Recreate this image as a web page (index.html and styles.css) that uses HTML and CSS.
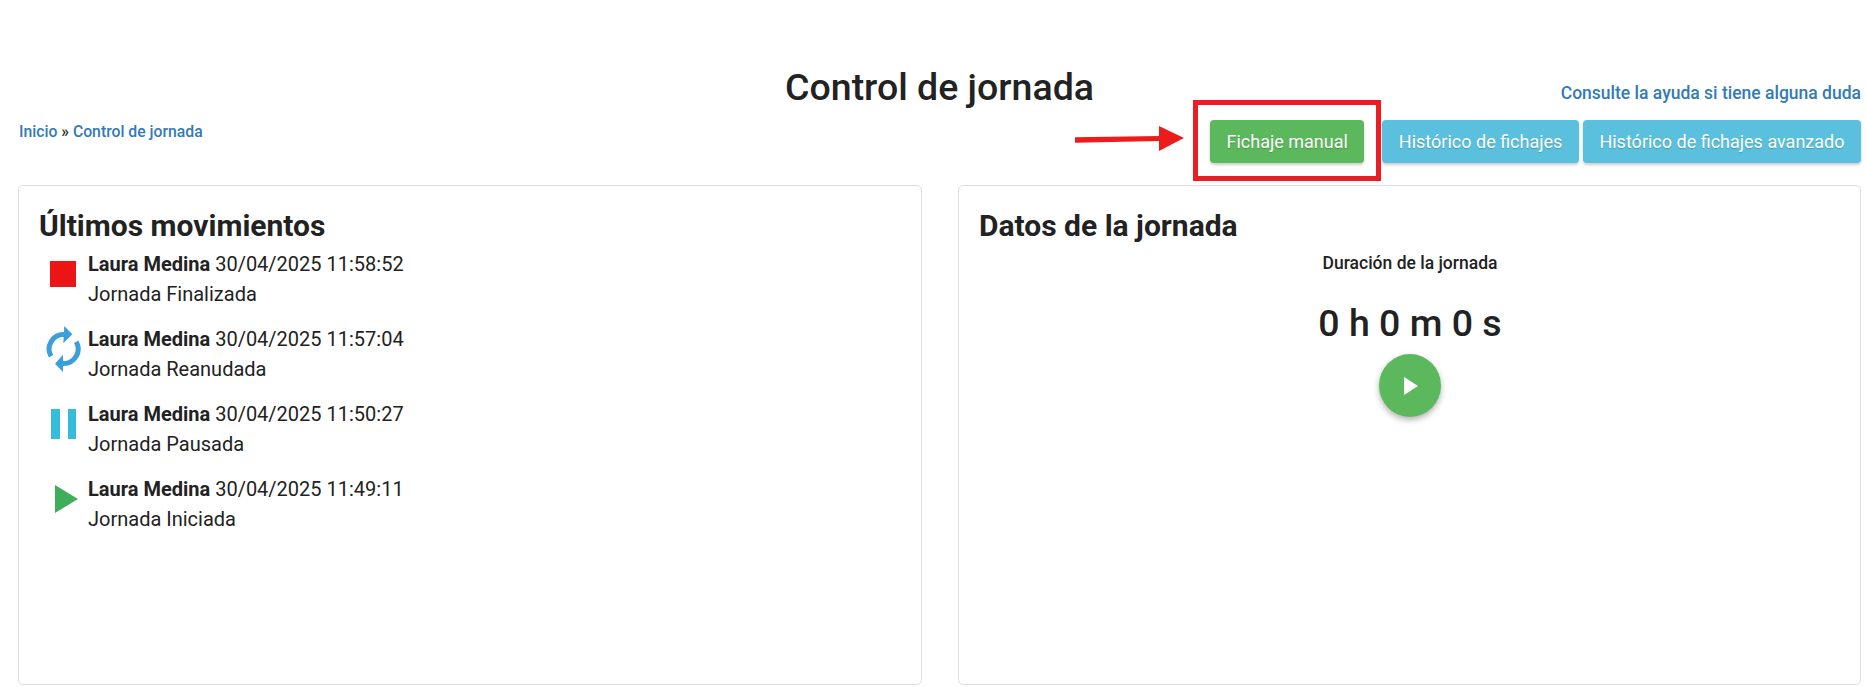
FILE: index.html
```html
<!DOCTYPE html>
<html lang="es">
<head>
    <meta charset="UTF-8">
    <title>Control de jornada</title>
    <link rel="stylesheet" href="styles.css">
</head>
<body>
    <div class="page-top">
        <h1 class="page-title">Control de jornada</h1>
        <a class="help-link" href="#">Consulte la ayuda si tiene alguna duda</a>
    </div>

    <div class="toolbar">
        <div class="breadcrumb"><a href="#">Inicio</a> » <a href="#">Control de jornada</a></div>
        <div class="actions">
            <button class="btn btn-success">Fichaje manual</button>
            <button class="btn btn-info">Histórico de fichajes</button>
            <button class="btn btn-info">Histórico de fichajes avanzado</button>
        </div>
    </div>

    <!-- anotacion de la captura -->
    <svg class="mark-arrow" width="110" height="26" viewBox="0 0 110 26">
        <path d="M0 11.3 L85 10 L85 15 L0 16.7 Z" fill="#ec1c1c"/>
        <path d="M84 0 L109 12 L84 25 Z" fill="#ec1c1c"/>
    </svg>
    <div class="mark-box"></div>

    <div class="panels">
        <section class="panel">
            <h2 class="panel-title">Últimos movimientos</h2>
            <ul class="moves">
                <li class="move">
                    <svg class="move-icon" width="50" height="60" viewBox="0 0 50 60"><rect x="11" y="12" width="26" height="26" fill="#ec1515"/></svg>
                    <div>
                        <div><b>Laura Medina</b> 30/04/2025 11:58:52</div>
                        <div>Jornada Finalizada</div>
                    </div>
                </li>
                <li class="move">
                    <svg class="move-icon" width="50" height="60" viewBox="0 0 50 60">
                        <path d="M12.1 32.25 A14.5 14.5 0 0 1 25.3 10.5" fill="none" stroke="#3b9fdb" stroke-width="5"/>
                        <path d="M25.3 2 L33.3 10.3 L24.3 19.3 Z" fill="#3b9fdb"/>
                        <path d="M37.2 17.75 A14.5 14.5 0 0 1 24 39.5" fill="none" stroke="#3b9fdb" stroke-width="5"/>
                        <path d="M24 30.7 L16 39.7 L24 48 Z" fill="#3b9fdb"/>
                    </svg>
                    <div>
                        <div><b>Laura Medina</b> 30/04/2025 11:57:04</div>
                        <div>Jornada Reanudada</div>
                    </div>
                </li>
                <li class="move">
                    <svg class="move-icon" width="50" height="60" viewBox="0 0 50 60"><rect x="12" y="10" width="9" height="30" fill="#35bcdc"/><rect x="29" y="10" width="8" height="30" fill="#35bcdc"/></svg>
                    <div>
                        <div><b>Laura Medina</b> 30/04/2025 11:50:27</div>
                        <div>Jornada Pausada</div>
                    </div>
                </li>
                <li class="move">
                    <svg class="move-icon" width="50" height="60" viewBox="0 0 50 60"><path d="M16 11 L39 25 L16 39 Z" fill="#3fae5a"/></svg>
                    <div>
                        <div><b>Laura Medina</b> 30/04/2025 11:49:11</div>
                        <div>Jornada Iniciada</div>
                    </div>
                </li>
            </ul>
        </section>

        <section class="panel">
            <h2 class="panel-title">Datos de la jornada</h2>
            <div class="shift">
                <div class="shift-label">Duración de la jornada</div>
                <div class="shift-time">0 h 0 m 0 s</div>
                <button class="play-btn">
                    <svg width="14" height="18" viewBox="0 0 14 18"><path d="M0 0 L14 9 L0 18 Z" fill="#fff"/></svg>
                </button>
            </div>
        </section>
    </div>
</body>
</html>
```

FILE: styles.css
```css
* {
    box-sizing: border-box;
}

body {
    margin: 0;
    padding: 0 6px 0 18px;
    position: relative;
    height: 687px;
    overflow: hidden;
    font-family: Roboto, sans-serif;
    font-size: 20px;
    line-height: 30px;
    color: #222;
    background-color: #fff;
}

a {
    color: #337ab7;
    text-decoration: none;
}

.page-top {
    display: flex;
    justify-content: flex-end;
    align-items: flex-end;
    position: relative;
    height: 106px;
}

.page-title {
    position: absolute;
    left: 0;
    right: 0;
    top: 65px;
    margin: 0;
    text-align: center;
    font-size: 37.5px;
    line-height: 44px;
    font-weight: 500;
}

.help-link {
    font-size: 17.5px;
    font-weight: 500;
    line-height: 24px;
    margin-bottom: 1px;
}

.toolbar {
    display: flex;
    justify-content: space-between;
    align-items: flex-start;
    height: 79px;
}

.breadcrumb {
    margin: 13px 0 0 1px;
    font-size: 15.75px;
    font-weight: 500;
    line-height: 26px;
}

.actions {
    display: flex;
    gap: 4px;
    margin-top: 14px;
}

.btn {
    height: 43px;
    padding: 0 16.5px;
    border: none;
    border-radius: 4px;
    color: #fff;
    font-family: inherit;
    font-size: 18px;
    text-shadow: 0 1px 1px rgba(0, 0, 0, 0.2);
    box-shadow: 0 2px 3px rgba(0, 0, 0, 0.2);
}

.btn-success {
    background-color: #5cb85c;
    margin-right: 14px;
}

.btn-info {
    background-color: #5bc0de;
}

.mark-box {
    position: absolute;
    left: 1193px;
    top: 100px;
    width: 188px;
    height: 81px;
    border: 5px solid #ec1c24;
}

.mark-arrow {
    position: absolute;
    left: 1075px;
    top: 126px;
}

.panels {
    display: grid;
    grid-template-columns: 904px 903px;
    gap: 36px;
}

.panel {
    height: 500px;
    padding: 20px;
    border: 1px solid #ddd;
    border-radius: 5px;
}

.panel-title {
    margin: 0;
    font-size: 30px;
    line-height: 40px;
    font-weight: 700;
}

.moves {
    list-style: none;
    margin: 3px 0 0;
    padding: 0;
}

.move {
    display: flex;
    height: 75px;
}

.move-icon {
    flex: none;
    margin-right: -1px;
}

.shift {
    display: flex;
    flex-direction: column;
    align-items: center;
    margin-top: 2px;
}

.shift-label {
    font-size: 17.5px;
    font-weight: 500;
    margin-left: 1px;
}

.shift-time {
    margin: 23px 0 0 1px;
    font-size: 37.5px;
    line-height: 44px;
    font-weight: 500;
}

.play-btn {
    display: flex;
    justify-content: center;
    align-items: center;
    width: 62px;
    height: 63px;
    margin-top: 9px;
    padding: 0 0 0 3px;
    border: none;
    border-radius: 50%;
    background-color: #5cb85c;
    box-shadow: 0 3px 6px rgba(0, 0, 0, 0.3);
}
```
